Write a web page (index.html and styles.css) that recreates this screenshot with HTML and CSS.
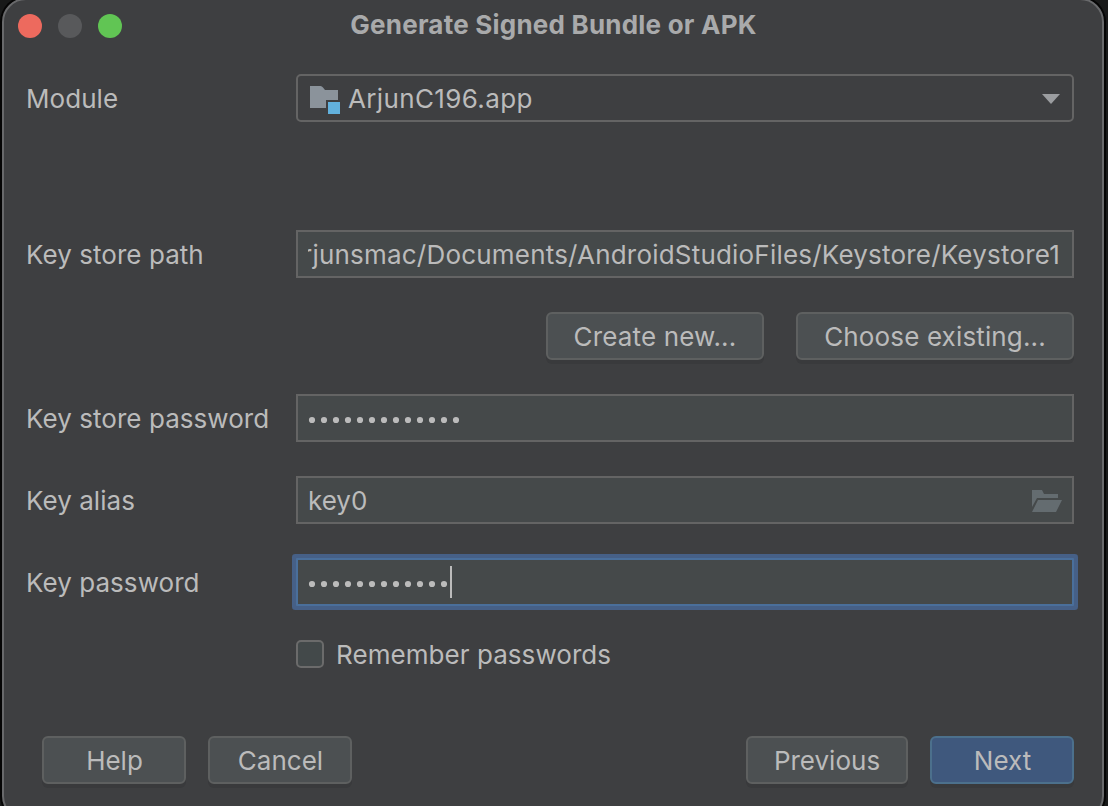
FILE: index.html
```html
<!DOCTYPE html>
<html lang="en">
<head>
<meta charset="utf-8">
<title>Generate Signed Bundle or APK</title>
<link rel="stylesheet" href="styles.css">
</head>
<body>
<main class="dialog">
  <header class="titlebar">
    <div class="lights"><i class="light red"></i><i class="light gray"></i><i class="light green"></i></div>
    <h1 class="title">Generate Signed Bundle or APK</h1>
  </header>
  <form class="form">
    <div class="row">
      <label class="label">Module</label>
      <div class="field select">
        <svg class="folder" width="32" height="30" viewBox="0 0 32 30"><path fill="#8b939b" d="M0 1h10.500q1.500 0 2.500 1.500L15 5h13v10H16v8H0z"/><path fill="#62b1dd" d="M18 17h12v12H18z"/></svg>
        <span class="text app">ArjunC196.app</span>
        <svg class="arrow" width="18" height="10" viewBox="0 0 18 10"><path fill="#9b9da0" d="M0 0h18L9 10z"/></svg>
      </div>
    </div>
    <div class="row row-path">
      <label class="label">Key store path</label>
      <div class="field input"><div class="clip"><span class="text path">rjunsmac/Documents/AndroidStudioFiles/Keystore/Keystore1</span></div></div>
    </div>
    <div class="row-actions">
      <button type="button" class="btn create">Create new...</button>
      <button type="button" class="btn choose">Choose existing...</button>
    </div>
    <div class="row spaced">
      <label class="label">Key store password</label>
      <div class="field input"><svg class="dots" width="156" height="8" viewBox="0 0 156 8"><path d="M4 4h144.1"/></svg></div>
    </div>
    <div class="row spaced">
      <label class="label">Key alias</label>
      <div class="field input"><span class="text">key0</span>
        <svg class="open" width="30" height="22" viewBox="0 0 30 22"><path fill="#646c70" d="M0 0h10l2 4h14v4H5L0 17z M6 10h24l-6 12H0z"/></svg>
      </div>
    </div>
    <div class="row spaced">
      <label class="label">Key password</label>
      <div class="field input focused"><svg class="dots" width="142" height="8" viewBox="0 0 142 8"><path d="M4 4h132.1"/></svg><i class="caret"></i></div>
    </div>
    <div class="row-check"><i class="checkbox"></i><span class="text remember">Remember passwords</span></div>
  </form>
  <footer class="footer">
    <button type="button" class="btn small">Help</button>
    <button type="button" class="btn small cancel">Cancel</button>
    <button type="button" class="btn prev">Previous</button>
    <button type="button" class="btn small next">Next</button>
  </footer>
</main>
</body>
</html>
```
FILE: styles.css
```css
* { box-sizing: border-box; }
body { margin: 0; width: 1108px; height: 806px; overflow: hidden; background: #181919; font-family: Inter, "Liberation Sans", sans-serif; font-size: 26px; line-height: 32px; color: #bbbbbb; }
.dialog { width: 1102px; height: 822px; margin: -2px 0 0 2px; border: 2px solid #68696b; border-radius: 24px; background: #3e3f41; box-shadow: 0 0 0 2px #050505; }
.titlebar { display: flex; align-items: center; height: 52px; padding-left: 14px; }
.lights { display: flex; gap: 16px; width: 104px; }
.light { width: 24px; height: 24px; border-radius: 50%; }
.red { background: #ed6a5e; }
.gray { background: #58595b; }
.green { background: #61c554; }
.title { flex: 1; margin: 0; padding: 0 117px 2px 0; text-align: center; font-size: 26px; line-height: 32px; font-weight: 700; letter-spacing: 0.22px; color: #a9aaab; }
.text { display: block; padding-top: 2px; white-space: nowrap; line-height: 32px; }
.app { letter-spacing: 0.36px; }
.path { letter-spacing: 0.2px; padding-right: 2px; }
.remember { letter-spacing: 0.06px; }
.form { padding: 22px 28px 0 22px; }
.row { display: flex; align-items: center; height: 48px; }
.label { width: 270px; flex: none; padding-top: 2px; white-space: nowrap; letter-spacing: 0.05px; }
.field { display: flex; align-items: center; flex: 1; min-width: 0; height: 48px; border: 2px solid #646464; padding: 0 10px; }
.select { border-radius: 5px; padding: 0 12px; }
.folder { margin: 4px 6px 0 0; }
.arrow { margin: 2px 0 0 auto; }
.input { background: #45494a; }
.row-path { margin-top: 108px; }
.clip { display: flex; justify-content: flex-end; width: 100%; overflow: hidden; }
.row-actions { display: flex; justify-content: flex-end; gap: 32px; margin-top: 34px; }
.btn { height: 48px; padding: 2px 0 0; border: 2px solid #5e6060; border-radius: 6px; background: #4c5052; color: #bbbbbb; font: inherit; box-shadow: 0 4px 0 #393a3c; }
.create { width: 218px; letter-spacing: 0.14px; }
.choose { width: 278px; letter-spacing: 0.14px; }
.spaced { margin-top: 34px; }
.dots { position: relative; top: 2px; }
.dots path { fill: none; stroke: #bbbbbb; stroke-width: 6.2; stroke-linecap: round; stroke-dasharray: 0 12; }
.open { margin: 2px 0 0 auto; }
.focused { border-color: #4a6f9b; box-shadow: 0 0 0 4px #466087; border-radius: 1px; }
.caret { width: 2px; height: 32px; background: #bbbbbb; }
.row-check { display: flex; align-items: center; gap: 12px; margin: 34px 0 0 270px; height: 28px; }
.checkbox { width: 28px; height: 28px; border: 2px solid #6b6b6b; border-radius: 5px; background: #43494a; }
.footer { display: flex; margin-top: 68px; padding: 0 28px 0 38px; }
.small { width: 144px; padding-left: 1px; }
.cancel { margin-left: 22px; }
.prev { width: 162px; margin-left: auto; }
.next { margin-left: 22px; background: #3f587d; border-color: #4c708c; }
```
